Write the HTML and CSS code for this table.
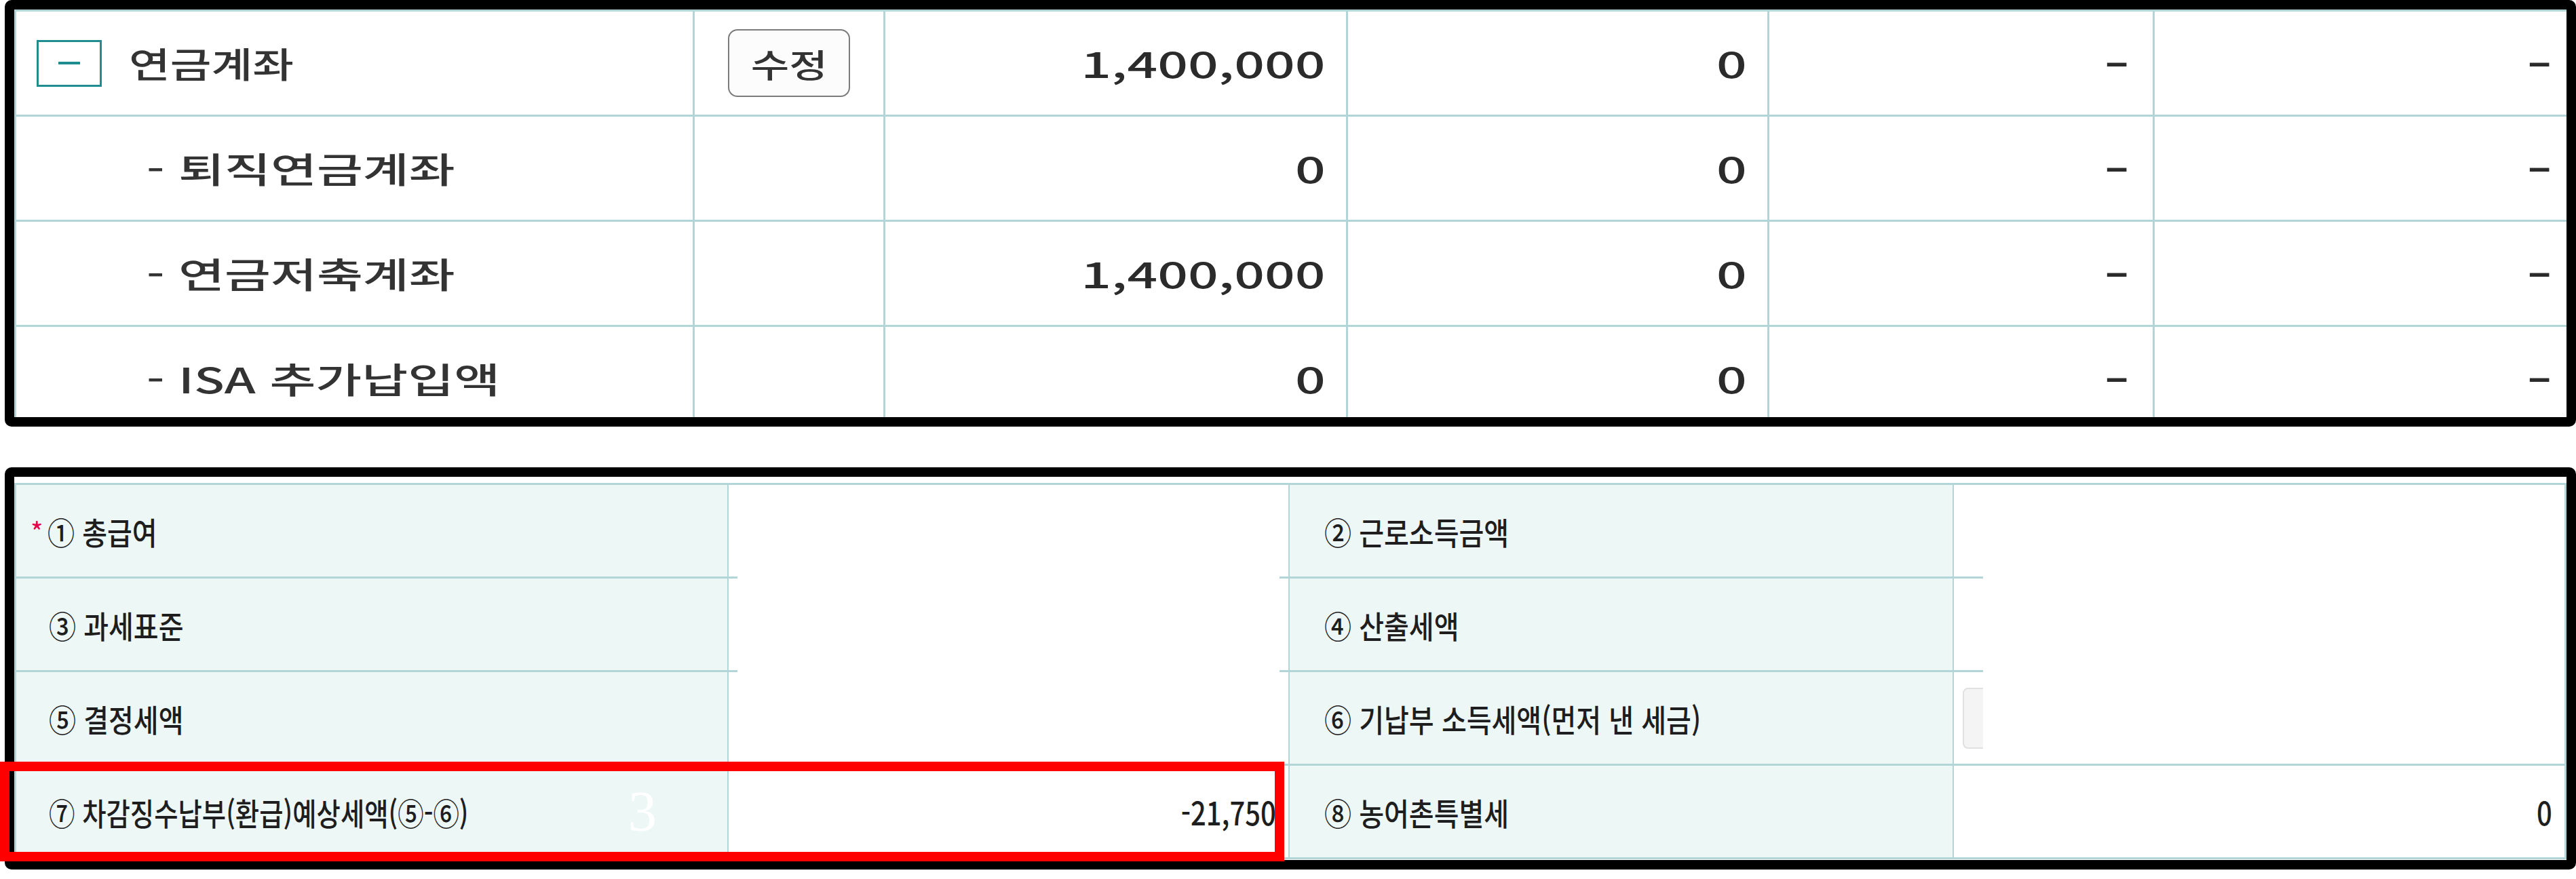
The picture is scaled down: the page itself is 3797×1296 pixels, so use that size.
FILE: index.html
```html
<!DOCTYPE html>
<html lang="ko">
<head>
<meta charset="utf-8">
<title>연금계좌 세액</title>
<link rel="stylesheet" href="styles.css">
</head>
<body>
<div class="page">
  <section class="frame frame-top">
    <div class="grid grid-top">
      <div class="cell c-name"><span class="toggle"><span class="toggle-bar"></span></span><span class="tx tx-l">연금계좌</span></div>
      <div class="cell c-btn"><button class="btn" type="button"><span class="tx tx-btn">수정</span></button></div>
      <div class="cell c-num"><span class="tx tx-n">1,400,000</span></div>
      <div class="cell c-num"><span class="tx tx-n">0</span></div>
      <div class="cell c-num c-dash"><span class="tx tx-d">-</span></div>
      <div class="cell c-num c-dash c-last"><span class="tx tx-d">-</span></div>

      <div class="cell c-name c-sub"><span class="tx tx-s">- 퇴직연금계좌</span></div>
      <div class="cell c-btn"></div>
      <div class="cell c-num"><span class="tx tx-n">0</span></div>
      <div class="cell c-num"><span class="tx tx-n">0</span></div>
      <div class="cell c-num c-dash"><span class="tx tx-d">-</span></div>
      <div class="cell c-num c-dash c-last"><span class="tx tx-d">-</span></div>

      <div class="cell c-name c-sub"><span class="tx tx-s">- 연금저축계좌</span></div>
      <div class="cell c-btn"></div>
      <div class="cell c-num"><span class="tx tx-n">1,400,000</span></div>
      <div class="cell c-num"><span class="tx tx-n">0</span></div>
      <div class="cell c-num c-dash"><span class="tx tx-d">-</span></div>
      <div class="cell c-num c-dash c-last"><span class="tx tx-d">-</span></div>

      <div class="cell c-name c-sub"><span class="tx tx-s">- ISA 추가납입액</span></div>
      <div class="cell c-btn"></div>
      <div class="cell c-num"><span class="tx tx-n">0</span></div>
      <div class="cell c-num"><span class="tx tx-n">0</span></div>
      <div class="cell c-num c-dash"><span class="tx tx-d">-</span></div>
      <div class="cell c-num c-dash c-last"><span class="tx tx-d">-</span></div>
    </div>
  </section>

  <section class="frame frame-bottom">
    <div class="grid grid-bottom">
      <div class="cell lbl lbl-1"><span class="req">*</span><span class="tx tx-b">① 총급여</span></div>
      <div class="cell val"></div>
      <div class="cell lbl lbl-2"><span class="tx tx-b">② 근로소득금액</span></div>
      <div class="cell val val-last"></div>

      <div class="cell lbl lbl-1"><span class="tx tx-b">③ 과세표준</span></div>
      <div class="cell val"></div>
      <div class="cell lbl lbl-2"><span class="tx tx-b">④ 산출세액</span></div>
      <div class="cell val val-last"></div>

      <div class="cell lbl lbl-1"><span class="tx tx-b">⑤ 결정세액</span></div>
      <div class="cell val"></div>
      <div class="cell lbl lbl-2"><span class="tx tx-b">⑥ 기납부 소득세액(먼저 낸 세금)</span></div>
      <div class="cell val val-last"><span class="field"></span></div>

      <div class="cell lbl lbl-1 lbl-mark"><span class="tx tx-b tx-long">⑦ 차감징수납부(환급)예상세액(⑤-⑥)</span><span class="mark">3</span></div>
      <div class="cell val val-num"><span class="tx tx-bn">-21,750</span></div>
      <div class="cell lbl lbl-2"><span class="tx tx-b">⑧ 농어촌특별세</span></div>
      <div class="cell val val-num val-last"><span class="tx tx-bn">0</span></div>
    </div>
    <div class="mask mask-a"></div>
    <div class="mask mask-b"></div>
  </section>

  <div class="highlight"></div>
</div>
</body>
</html>
```

FILE: styles.css
```css
* { box-sizing: border-box; }

html, body {
  margin: 0;
  padding: 0;
  background: #ffffff;
}

body {
  font-family: "Noto Sans CJK KR", "Noto Sans", sans-serif;
  color: #2b2b2b;
}

.page {
  position: relative;
  width: 3797px;
  height: 1296px;
  padding-left: 7px;
}

.frame {
  width: 3790px;
  border: 14px solid #000;
  border-radius: 10px;
  overflow: hidden;
  background: #fff;
}

.frame-top {
  height: 629px;
}

.frame-bottom {
  position: relative;
  height: 593px;
  margin-top: 60px;
  padding-top: 9px;
}

.grid {
  display: grid;
  border-left: 3px solid #b2d6d7;
  border-top: 3px solid #b2d6d7;
}

.grid-top {
  grid-template-columns: 1000px 281px 682px 621px 568px 607px;
  grid-auto-rows: 155px;
}

.cell {
  display: flex;
  align-items: center;
  border-right: 3px solid #b2d6d7;
  border-bottom: 3px solid #b2d6d7;
  min-width: 0;
  white-space: nowrap;
}

.tx {
  display: inline-block;
  line-height: 1;
}

/* top table */
.c-name {
  padding-left: 30px;
}

.c-sub {
  padding-left: 192px;
}

.toggle {
  width: 96px;
  height: 69px;
  border: 3px solid #1f8c8f;
  display: flex;
  align-items: center;
  justify-content: center;
  margin-right: 40px;
  flex: none;
}

.toggle-bar {
  width: 32px;
  height: 4px;
  background: #1f8c8f;
}

.tx-l,
.tx-s {
  font-size: 52px;
  font-weight: 500;
  transform-origin: left center;
  color: #333;
}

.tx-l {
  transform: scaleX(1.27);
}

.tx-s {
  transform: scaleX(1.42);
}

.c-btn {
  justify-content: center;
}

.btn {
  width: 180px;
  height: 100px;
  border: 2px solid #7b7b7b;
  border-radius: 14px;
  background: #fcfcfc;
  padding: 0;
  display: flex;
  align-items: center;
  justify-content: center;
  font-family: inherit;
  color: #333;
}

.tx-btn {
  font-size: 48px;
  font-weight: 500;
  transform: scaleX(1.28);
}

.c-num {
  justify-content: flex-end;
  padding-right: 30px;
}

.c-dash {
  padding-right: 34px;
}

.c-last {
  border-right: 0;
  padding-right: 21px;
}

.tx-n {
  font-size: 52px;
  font-weight: 500;
  transform: scaleX(1.51);
  transform-origin: right center;
  color: #2b2b2b;
}

.tx-d {
  font-size: 52px;
  font-weight: 700;
  transform: scaleX(2.0);
  transform-origin: right center;
  color: #2b2b2b;
}

/* bottom table */
.grid-bottom {
  grid-template-columns: 1050px 827px 979px 903px;
  grid-auto-rows: 138px;
}

.grid-bottom .cell {
  border-right-width: 2px;
}

.grid-bottom .val-last {
  border-right-width: 3px;
}

.lbl {
  background: #edf7f6;
}

.lbl-1 {
  padding-left: 48px;
}

.lbl-2 {
  padding-left: 51px;
}

.lbl-mark {
  position: relative;
}

.req {
  display: inline-block;
  width: 25px;
  margin-left: -27px;
  color: #e8004a;
  font-size: 40px;
  line-height: 1;
}

.tx-b {
  font-size: 46px;
  font-weight: 500;
  transform: scaleX(0.87);
  transform-origin: left center;
  color: #1e1e1e;
}

.tx-long {
  transform: scaleX(0.835);
}

.val {
  background: #fff;
}

.val-num {
  justify-content: flex-end;
  padding-right: 18px;
}

.tx-bn {
  font-size: 47px;
  font-weight: 500;
  transform: scaleX(0.85);
  transform-origin: right center;
  color: #1e1e1e;
}

.field {
  display: block;
  width: 200px;
  height: 90px;
  margin-left: 13px;
  border: 2px solid #e1e1e1;
  border-radius: 8px;
  background: #f4f4f4;
}

.mark {
  position: absolute;
  left: 902px;
  top: 26px;
  font-family: "Liberation Serif", serif;
  font-size: 84px;
  line-height: 1;
  color: #ffffff;
}

.mask {
  position: absolute;
  top: 13px;
  height: 410px;
  background: #ffffff;
}

.mask-a {
  left: 1066px;
  width: 799px;
}

.mask-b {
  left: 2902px;
  width: 857px;
}

.highlight {
  position: absolute;
  left: 0;
  top: 1123px;
  width: 1893px;
  height: 147px;
  border: 14px solid #ff0000;
}
```
